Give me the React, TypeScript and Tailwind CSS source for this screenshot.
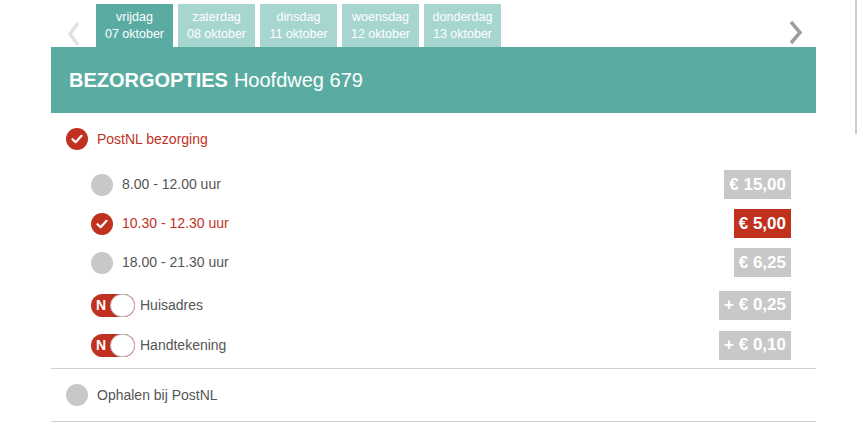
const days = [
  { day: "vrijdag", date: "07 oktober", active: true },
  { day: "zaterdag", date: "08 oktober" },
  { day: "dinsdag", date: "11 oktober" },
  { day: "woensdag", date: "12 oktober" },
  { day: "donderdag", date: "13 oktober" },
];

const slots = [
  { label: "8.00 - 12.00 uur", price: "€ 15,00" },
  { label: "10.30 - 12.30 uur", price: "€ 5,00", checked: true },
  { label: "18.00 - 21.30 uur", price: "€ 6,25" },
];

const extras = [
  { label: "Huisadres", price: "+ € 0,25" },
  { label: "Handtekening", price: "+ € 0,10" },
];

const Radio = ({ checked }: { checked?: boolean }) =>
  checked ? (
    <span className="flex h-[22px] w-[22px] shrink-0 items-center justify-center rounded-full bg-[#c0321f]">
      <svg width="12" height="10" viewBox="0 0 12 10" fill="none">
        <path d="M1.5 5.2 L4.6 8.2 L10.5 1.8" stroke="white" strokeWidth="2.2" strokeLinecap="round" strokeLinejoin="round" />
      </svg>
    </span>
  ) : (
    <span className="h-[22px] w-[22px] shrink-0 rounded-full bg-[#c8c8c8]" />
  );

const Price = ({ value, active }: { value: string; active?: boolean }) => (
  <span
    className={`flex h-[29px] items-center px-[5px] text-[17px] font-bold text-white ${
      active ? "bg-[#c0321f]" : "bg-[#c8c8c8]"
    }`}
  >
    {value}
  </span>
);

const Toggle = () => (
  <span className="relative flex h-[23px] w-[44px] shrink-0 items-center rounded-full bg-[#c0321f]">
    <span className="pl-[5px] text-[14px] font-bold leading-none text-white">N</span>
    <span className="absolute right-0 top-0 h-[23px] w-[25px] rounded-full border border-[#bdbdbd] bg-white" />
  </span>
);

export default function App() {
  return (
    <div className="relative h-[439px] w-[858px] overflow-hidden bg-white font-['Liberation_Sans',Arial,sans-serif]">
      <div className="absolute right-[1px] top-0 h-[134px] w-[2px] bg-[#cfcfcf]" />
      <div className="ml-[51px] w-[765px]">
        {/* day tabs */}
        <div className="flex h-[47px] items-end">
          <div className="flex h-[47px] w-[45px] items-center justify-center pt-[20px]">
            <svg width="14" height="26" viewBox="0 0 14 26" fill="none">
              <path d="M11 2 L3 13 L11 24" stroke="#e2e2e2" strokeWidth="3.5" />
            </svg>
          </div>
          <div className="flex gap-[5px]">
            {days.map((d) => (
              <div
                key={d.day}
                className={`flex h-[43px] w-[77px] flex-col items-center justify-center text-[12.5px] leading-[17px] text-white ${
                  d.active ? "bg-[#5aaca2]" : "bg-[#a7d6d1]"
                }`}
              >
                <span>{d.day}</span>
                <span>{d.date}</span>
              </div>
            ))}
          </div>
          <div className="flex-1" />
          <div className="flex h-[47px] items-center pr-[12px] pt-[18px]">
            <svg width="16" height="26" viewBox="0 0 16 26" fill="none">
              <path d="M3 2 L12 12.5 L3 23" stroke="#9e9e9e" strokeWidth="3.5" />
            </svg>
          </div>
        </div>

        {/* header */}
        <div className="flex h-[66px] items-center bg-[#5aaca2] pl-[18px] text-[20px] text-white">
          <span className="font-bold">BEZORGOPTIES</span>
          <span className="ml-[6px]">Hoofdweg 679</span>
        </div>

        {/* PostNL bezorging */}
        <div className="flex h-[52px] items-center gap-[9px] pl-[15px] text-[14px] text-[#c0321f]">
          <Radio checked />
          <span>PostNL bezorging</span>
        </div>

        <div className="pl-[40px] pr-[25px]">
          {slots.map((s) => (
            <div key={s.label} className="flex h-[39px] items-center justify-between">
              <div className={`flex items-center gap-[9px] text-[14px] ${s.checked ? "text-[#c0321f]" : "text-[#555555]"}`}>
                <Radio checked={s.checked} />
                <span>{s.label}</span>
              </div>
              <Price value={s.price} active={s.checked} />
            </div>
          ))}
          <div className="mt-[3px]">
            {extras.map((e) => (
              <div key={e.label} className="flex h-[40px] items-center justify-between">
                <div className="flex items-center gap-[5px] text-[14px] text-[#555555]">
                  <Toggle />
                  <span>{e.label}</span>
                </div>
                <Price value={e.price} />
              </div>
            ))}
          </div>
        </div>

        <div className="mt-[3px] border-t border-[#d0d0d0]" />
        <div className="flex h-[52px] items-center gap-[9px] pl-[15px] text-[14px] text-[#555555]">
          <Radio />
          <span>Ophalen bij PostNL</span>
        </div>
        <div className="border-t border-[#d0d0d0]" />
      </div>
    </div>
  );
}
